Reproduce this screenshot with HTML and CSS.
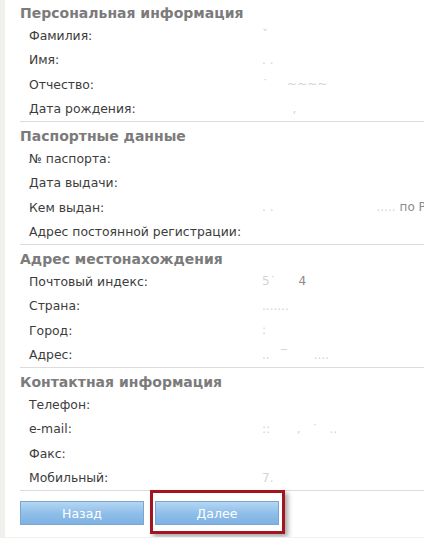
FILE: index.html
```html
<!DOCTYPE html>
<html lang="ru">
<head>
  <meta charset="UTF-8">
  <title>Анкета</title>
  <link rel="stylesheet" href="styles.css">
</head>
<body>
  <main class="sheet">
    <section class="block first">
      <h2>Персональная информация</h2>
      <div class="row"><span class="label">Фамилия:</span><span class="value faint">ˇ</span></div>
      <div class="row"><span class="label">Имя:</span><span class="value faint">. .</span></div>
      <div class="row"><span class="label">Отчество:</span><span class="value faint">˙ &nbsp; &nbsp; ~~~~</span></div>
      <div class="row"><span class="label">Дата рождения:</span><span class="value faint">&nbsp; &nbsp; &nbsp; &nbsp; ,</span></div>
    </section>

    <section class="block">
      <h2>Паспортные данные</h2>
      <div class="row"><span class="label">№ паспорта:</span><span class="value"></span></div>
      <div class="row"><span class="label">Дата выдачи:</span><span class="value"></span></div>
      <div class="row"><span class="label">Кем выдан:</span><span class="value"><span class="faint">. .</span><span class="faint smudge">.....</span>по Р</span></div>
      <div class="row"><span class="label">Адрес постоянной регистрации:</span><span class="value"></span></div>
    </section>

    <section class="block">
      <h2>Адрес местонахождения</h2>
      <div class="row"><span class="label">Почтовый индекс:</span><span class="value"><span class="faint">5˙</span> &nbsp; &nbsp; &nbsp;4</span></div>
      <div class="row"><span class="label">Страна:</span><span class="value faint">.......</span></div>
      <div class="row"><span class="label">Город:</span><span class="value faint">:</span></div>
      <div class="row"><span class="label">Адрес:</span><span class="value faint">.. &nbsp; ‾ &nbsp; &nbsp; &nbsp; ....</span></div>
    </section>

    <section class="block">
      <h2>Контактная информация</h2>
      <div class="row"><span class="label">Телефон:</span><span class="value"></span></div>
      <div class="row"><span class="label">e-mail:</span><span class="value faint">:: &nbsp; &nbsp; &nbsp; , &nbsp; ˙ &nbsp; ..</span></div>
      <div class="row"><span class="label">Факс:</span><span class="value"></span></div>
      <div class="row"><span class="label">Мобильный:</span><span class="value faint">7.</span></div>
    </section>

    <div class="actions">
      <button type="button" class="btn">Назад</button>
      <span class="marked">
        <button type="button" class="btn">Далее</button>
        <span class="highlight"></span>
      </span>
    </div>
  </main>
</body>
</html>
```

FILE: styles.css
```css
* {
  box-sizing: border-box;
}

body {
  margin: 0;
  background: #f0f0ec;
  font-family: "DejaVu Sans", Verdana, sans-serif;
  color: #3c3c3c;
  overflow: hidden;
}

.sheet {
  margin-left: 5px;
  min-height: 538px;
  background: #ffffff;
  padding-left: 15px;
}

.block {
  border-bottom: 1px solid #dcdcdc;
  padding-top: 5px;
}

.block.first {
  margin-top: -1px;
}

.block h2 {
  margin: 0;
  font-size: 14px;
  line-height: 19px;
  font-weight: bold;
  color: #7b7b7b;
}

.row {
  display: flex;
  align-items: center;
  height: 24.5px;
  padding-left: 9px;
  font-size: 12.4px;
  white-space: nowrap;
}

.label {
  width: 233px;
  flex-shrink: 0;
}

.value {
  color: #8a8a8a;
  font-size: 12px;
}

.faint {
  color: #d4d4d4;
}

.smudge {
  margin-left: 103px;
  margin-right: 4px;
}

.actions {
  display: flex;
  gap: 11px;
  padding-top: 10px;
}

.btn {
  width: 124px;
  height: 24px;
  padding: 0;
  border: 1px solid #7aa7d2;
  background: linear-gradient(to bottom, #b4d6f3, #8dbde9 55%, #7eb2e2);
  color: #ffffff;
  font-family: "DejaVu Sans", Verdana, sans-serif;
  font-size: 12.5px;
}

.marked {
  position: relative;
  display: block;
}

.highlight {
  position: absolute;
  left: -5px;
  top: -11px;
  width: 135px;
  height: 44px;
  border: 3px solid #a4161f;
  box-shadow: 3px 3px 5px rgba(0, 0, 0, 0.35);
}
```
